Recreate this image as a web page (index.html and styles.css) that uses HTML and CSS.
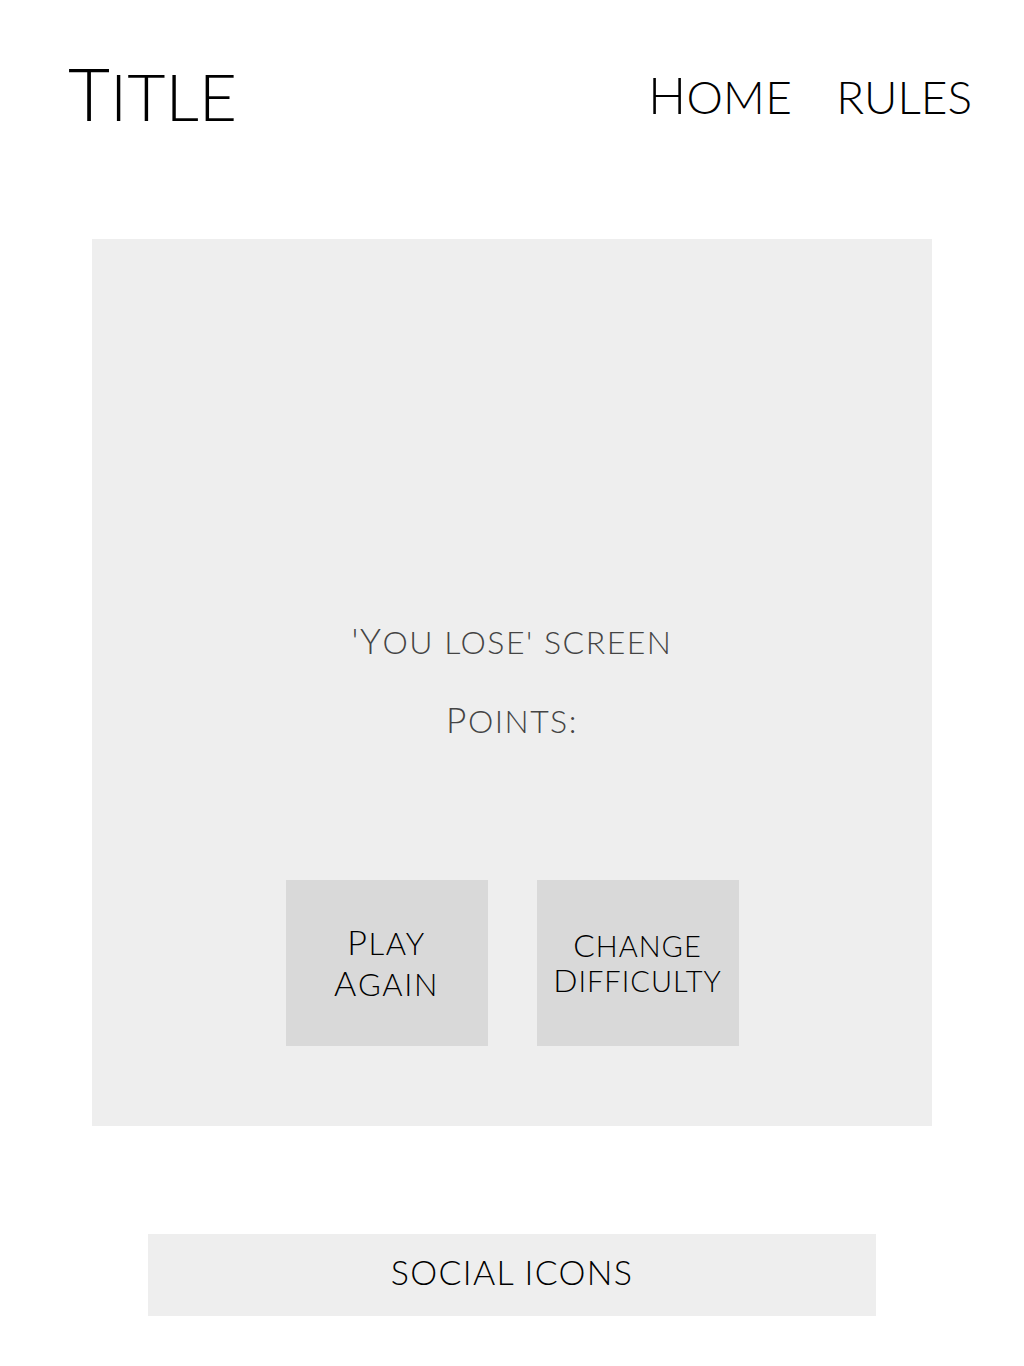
FILE: index.html
```html
<!DOCTYPE html>
<html lang="en">
<head>
  <meta charset="UTF-8">
  <title>Title</title>
  <link rel="stylesheet" href="styles.css">
</head>
<body>
  <!-- header -->
  <header class="header">
    <div class="header__title">Title</div>
    <nav class="header__nav">
      <a class="header__link" href="#">Home</a>
      <a class="header__link header__link--lower" href="#">rules</a>
    </nav>
  </header>

  <!-- game screen -->
  <main class="game">
    <div class="game__message">'You lose' screen</div>
    <div class="game__points">Points:</div>
    <div class="game__buttons">
      <button class="game__button game__button--play">
        <span class="game__line">Play</span>
        <span class="game__line">Again</span>
      </button>
      <button class="game__button game__button--change">
        <span class="game__line">Change</span>
        <span class="game__line">Difficulty</span>
      </button>
    </div>
  </main>

  <!-- footer -->
  <footer class="footer">
    <div class="footer__social">Social icons</div>
  </footer>
</body>
</html>
```

FILE: styles.css
```css
/* ====== base ====== */
html, body {
  margin: 0;
  background: #fff;
}

body {
  font-family: Lato, "Open Sans", sans-serif;
  font-weight: 300;
  text-transform: uppercase;
  color: #000;
}

/* big first letter, like a small-caps face */
.header__title::first-letter,
.header__link::first-letter,
.game__message::first-letter,
.game__points::first-letter,
.game__line::first-letter,
.footer__social::first-letter {
  font-size: 1.1em;
}

.header__link--lower::first-letter {
  font-size: 1em;
}

/* ====== header ====== */
.header {
  display: flex;
  align-items: flex-end;
  justify-content: space-between;
  height: 130px;
  padding: 0 52px 0 68px;
}

.header__title {
  font-size: 66px;
  letter-spacing: 0;
  line-height: 1;
}

.header__nav {
  display: flex;
  align-items: baseline;
  gap: 44px;
  margin-bottom: 9px;
}

.header__link {
  display: inline-block;
  font-size: 46px;
  letter-spacing: 0.3px;
  line-height: 1;
  color: #000;
  text-decoration: none;
}

.header__link--lower {
  letter-spacing: 0;
}

/* ====== game ====== */
.game {
  display: flex;
  flex-direction: column;
  align-items: center;
  width: 840px;
  height: 887px;
  margin: 109px auto 0;
  background: #eee;
  box-sizing: border-box;
  padding-top: 384px;
  color: #444;
}

.game__message,
.game__points {
  font-size: 32px;
  letter-spacing: 1.5px;
  line-height: 1;
}

.game__points {
  margin-top: 44px;
}

.game__buttons {
  display: flex;
  gap: 49px;
  margin-top: 143px;
}

.game__button {
  display: flex;
  flex-direction: column;
  align-items: center;
  justify-content: center;
  width: 202px;
  height: 166px;
  border: 0;
  background: #d9d9d9;
  font-family: inherit;
  font-weight: 300;
  text-transform: uppercase;
  color: #000;
  padding: 0;
}

.game__line {
  display: block;
}

.game__button--play {
  font-size: 31px;
  line-height: 40px;
  letter-spacing: 1.6px;
}

.game__button--change {
  font-size: 29px;
  line-height: 35px;
  letter-spacing: 1px;
}

/* ====== footer ====== */
.footer {
  display: flex;
  justify-content: center;
  padding: 108px 0 50px;
}

.footer__social {
  display: flex;
  align-items: center;
  justify-content: center;
  width: 728px;
  height: 82px;
  box-sizing: border-box;
  padding-bottom: 8px;
  background: #eee;
  font-size: 34px;
  letter-spacing: 1.3px;
}
```
